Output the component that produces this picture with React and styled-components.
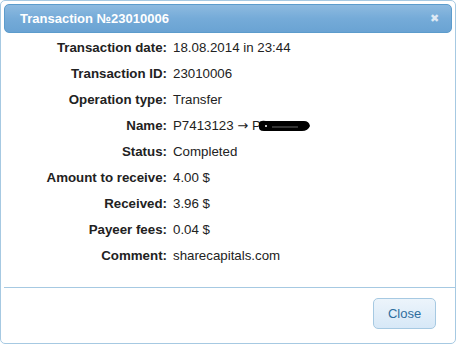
import React from "react";
import styled, { createGlobalStyle } from "styled-components";

const Global = createGlobalStyle`
  html, body {
    margin: 0;
    padding: 0;
    background: #fff;
    font-family: "Liberation Sans", Arial, sans-serif;
  }
`;

const rows = [
  ["Transaction date:", "18.08.2014 in 23:44"],
  ["Transaction ID:", "23010006"],
  ["Operation type:", "Transfer"],
  ["Name:", "name"],
  ["Status:", "Completed"],
  ["Amount to receive:", "4.00 $"],
  ["Received:", "3.96 $"],
  ["Payeer fees:", "0.04 $"],
  ["Comment:", "sharecapitals.com"],
];

function App() {
  return (
    <>
      <Global />
      <Dialog>
        <TitleBar>
          <Title>Transaction №23010006</Title>
          <CloseX>✖</CloseX>
        </TitleBar>
        <Body>
          {rows.map(([label, value]) => (
            <Row key={label}>
              <Label>{label}</Label>
              {value === "name" ? (
                <Value>
                  P7413123 <Arrow>→</Arrow> P
                  <Redact viewBox="0 0 52 12" width="52" height="12">
                    <path d="M1 3 Q2 0 8 1 L46 1 Q51 1 52 6 Q50 11 44 11 L6 11 Q0 11 1 6 Z" fill="#000" />
                    <circle cx="8" cy="6" r="1" fill="#fff" />
                    <path d="M14 7 L40 7" stroke="#666" strokeWidth="1" />
                  </Redact>
                </Value>
              ) : (
                <Value>{value}</Value>
              )}
            </Row>
          ))}
        </Body>
        <Footer>
          <Button>Close</Button>
        </Footer>
      </Dialog>
    </>
  );
}

const Dialog = styled.div`
  width: 456px;
  height: 344px;
  box-sizing: border-box;
  border: 1px solid #a6c9e2;
  border-radius: 5px;
  padding: 3px;
  background: #fff;
  display: flex;
  flex-direction: column;
`;

const TitleBar = styled.div`
  height: 29px;
  box-sizing: border-box;
  border: 1px solid #5c9ccc;
  border-radius: 5px;
  background: linear-gradient(#8dbae0, #75abd8 50%, #6aa3d3);
  display: flex;
  align-items: center;
  justify-content: space-between;
  padding: 0 12px 0 15px;
`;

const Title = styled.span`
  color: #fff;
  font-weight: bold;
  font-size: 13px;
`;

const CloseX = styled.span`
  color: #dde9f4;
  font-size: 11px;
`;

const Body = styled.div`
  display: grid;
  grid-template-columns: 163px 1fr;
  column-gap: 6px;
  padding-top: 2px;
`;

const Row = styled.div`
  display: contents;
`;

const Label = styled.div`
  text-align: right;
  font-weight: bold;
  font-size: 13.3px;
  color: #222;
  line-height: 26px;
`;

const Value = styled.div`
  font-size: 13.3px;
  color: #222;
  line-height: 26px;
  display: flex;
  align-items: center;
  white-space: pre;
`;

const Arrow = styled.span`
  font-family: "DejaVu Sans", sans-serif;
  font-size: 13px;
`;

const Redact = styled.svg`
  margin-left: -3px;
`;

const Footer = styled.div`
  margin-top: auto;
  margin-right: -3px;
  border-top: 1px solid #a6c9e2;
  padding: 10px 19px 11px 0;
  display: flex;
  justify-content: flex-end;
`;

const Button = styled.button`
  width: 63px;
  height: 31px;
  border: 1px solid #a6c9e2;
  border-radius: 5px;
  background: linear-gradient(#ecf4fb, #d7e8f7);
  color: #2e6e9e;
  font-family: "Liberation Sans", Arial, sans-serif;
  font-size: 13px;
`;

export default App;
